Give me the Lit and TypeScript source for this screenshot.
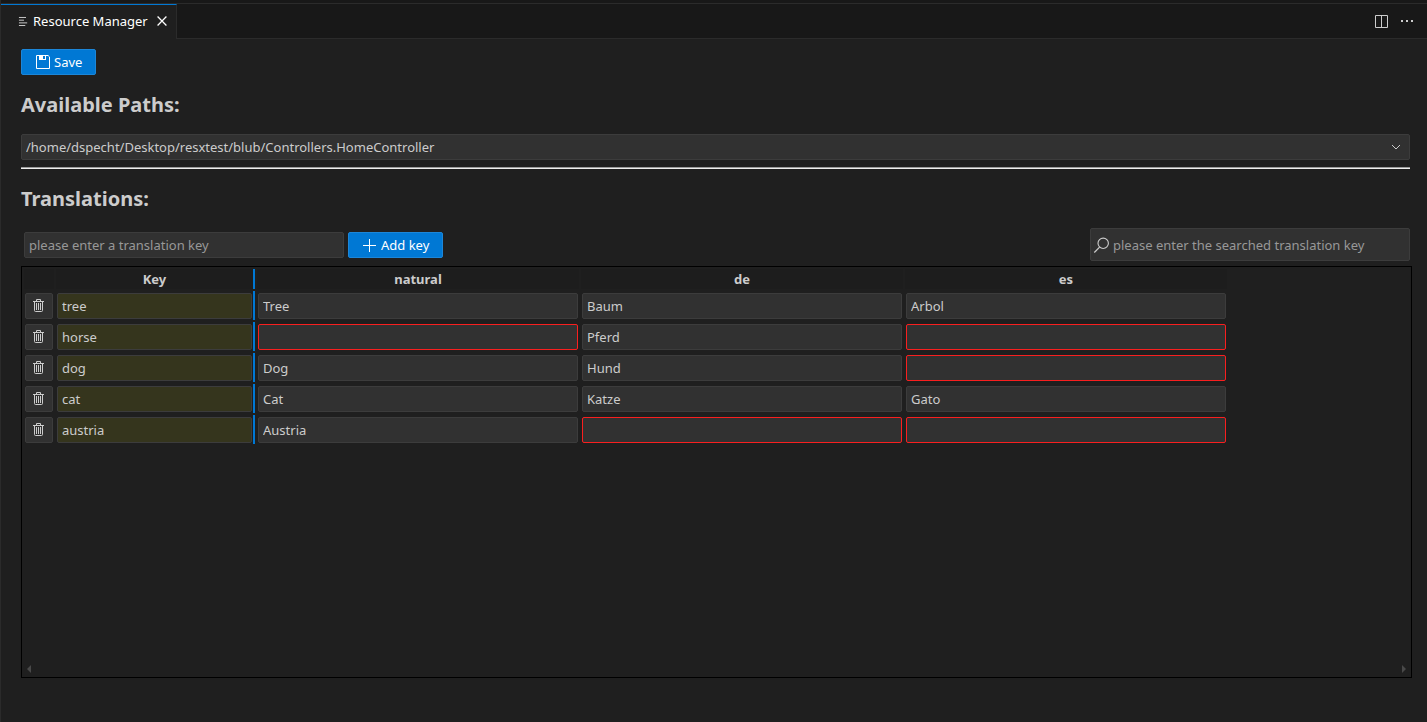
import { LitElement, html, css, svg } from "lit";
import { customElement, property, state } from "lit/decorators.js";
import { classMap } from "lit/directives/class-map.js";

interface Row {
  key: string;
  values: Record<string, string>;
}

const glyph = (size: number, body: unknown) => html`
  <svg class="icon" width=${size} height=${size} viewBox="0 0 16 16" fill="none" aria-hidden="true">
    ${body}
  </svg>
`;

const icons = {
  list: svg`<path d="M2.6 3.3h9.4M2.6 6.9h6.7M2.6 10.5h11M2.6 14h8.4" stroke="#ccc" stroke-width="1.3"/>`,
  close: svg`<path d="M2.1 2.1l11.8 11.8M13.9 2.1L2.1 13.9" stroke="currentColor" stroke-width="1.7"/>`,
  split: svg`<path d="M2.5 2.5h12v12h-12zM8.5 2.5v12" stroke="currentColor"/>`,
  more: svg`<path d="M2 7h2v2H2zM7 7h2v2H7zM12 7h2v2h-2z" fill="currentColor"/>`,
  save: svg`<path d="M1.5 1.5h11.6l1.4 1.4v11.6h-13z" stroke="currentColor"/>
    <path d="M4 1h7v5H4z" fill="currentColor"/><path d="M8 2h2v3H8z" fill="#0078d4"/>`,
  add: svg`<path d="M7.5 2v13M1 8.5h13" stroke="currentColor"/>`,
  search: svg`<circle cx="10.2" cy="6.3" r="5.2" stroke="currentColor" stroke-width="1.1"/>
    <path d="M6.6 10.1L1.3 15.5" stroke="currentColor" stroke-width="1.3"/>`,
  chevron: svg`<path d="M4 6l4 4 4-4" stroke="currentColor"/>`,
  trash: svg`<path d="M2 3.5h11M5.5 3.5v-2h4v2M3.5 3.5v9q0 1 1 1h6q1 0 1-1v-9M5.5 5v7M7.5 5v7M9.5 5v7" stroke="currentColor"/>`,
};

@customElement("editor-tabs")
export class EditorTabs extends LitElement {
  @property() label = "";

  static styles = css`
    :host {
      display: flex;
      height: 35px;
      padding-top: 3px;
      background: linear-gradient(#2b2b2b, #2b2b2b) 0 3px / 100% 1px no-repeat #181818;
      border-bottom: 1px solid #2b2b2b;
      font: 13px/18px "Noto Sans", sans-serif;
    }
    .tab {
      display: flex;
      align-items: center;
      gap: 4px;
      height: 35px;
      box-sizing: border-box;
      margin-top: 1px;
      padding: 0 8px 2px 16px;
      border-top: 1px solid #0078d4;
      border-right: 1px solid #2b2b2b;
      background: #1f1f1f;
      color: #fff;
    }
    .actions {
      display: flex;
      align-items: center;
      gap: 10px;
      margin-left: auto;
      padding-right: 12px;
    }
    button {
      display: flex;
      padding: 0;
      border: 0;
      background: none;
      color: #ccc;
      cursor: pointer;
    }
    .tab button {
      margin-left: 4px;
      color: #fff;
    }
  `;

  render() {
    return html`
      <div class="tab">
        ${glyph(12, icons.list)}
        <span>${this.label}</span>
        <button aria-label="Close">${glyph(12, icons.close)}</button>
      </div>
      <div class="actions">
        <button aria-label="Split editor">${glyph(16, icons.split)}</button>
        <button aria-label="More actions">${glyph(16, icons.more)}</button>
      </div>
    `;
  }
}

@customElement("app-root")
export class AppRoot extends LitElement {
  @state() private languages = ["natural", "de", "es"];
  @state() private rows: Row[] = [
    { key: "tree", values: { natural: "Tree", de: "Baum", es: "Arbol" } },
    { key: "horse", values: { de: "Pferd" } },
    { key: "dog", values: { natural: "Dog", de: "Hund" } },
    { key: "cat", values: { natural: "Cat", de: "Katze", es: "Gato" } },
    { key: "austria", values: { natural: "Austria" } },
  ];

  static styles = css`
    :host {
      display: flex;
      flex-direction: column;
      min-height: 100vh;
      box-sizing: border-box;
      border-left: 1px solid #2b2b2b;
      background: #1f1f1f;
      color: #ccc;
      font: 13px/18px "Noto Sans", sans-serif;
    }
    main {
      display: flex;
      flex: 1;
      flex-direction: column;
      padding: 10px 17px 44px 20px;
    }
    button,
    input,
    select {
      height: 26px;
      box-sizing: border-box;
      border: 1px solid #3c3c3c;
      border-radius: 2px;
      background: #313131;
      color: #ccc;
      font: inherit;
    }
    input,
    select {
      width: 320px;
      padding: 0 4px;
    }
    input::placeholder {
      color: #989898;
      opacity: 1;
    }
    .icon {
      display: block;
      flex: none;
    }
    .primary {
      display: flex;
      align-items: center;
      gap: 3px;
      padding: 0 13px;
      border-color: #1c86d8;
      background: #0078d4;
      color: #fff;
      cursor: pointer;
    }
    .save-button {
      align-self: flex-start;
    }
    h2 {
      margin: 16px 0;
      font-size: 20px;
      line-height: 27px;
    }
    .select {
      display: grid;
      align-items: center;
    }
    .select > * {
      grid-area: 1 / 1;
    }
    .select select {
      width: 100%;
      appearance: none;
    }
    .select .icon {
      justify-self: end;
      margin-right: 6px;
      pointer-events: none;
    }
    hr {
      width: 100%;
      box-sizing: border-box;
      margin: 7px 0 0;
      border: 0;
      border-top: 1px solid #9a9a9a;
      border-bottom: 1px solid #eee;
    }
    .toolbar {
      display: flex;
      align-items: center;
      gap: 4px;
      padding-left: 3px;
    }
    .search {
      display: flex;
      align-items: center;
      width: 320px;
      height: 33px;
      box-sizing: border-box;
      margin-left: auto;
      padding-left: 2px;
      border: 1px solid #3c3c3c;
      border-radius: 2px;
      background: #313131;
    }
    .search input {
      flex: 1;
      min-width: 0;
      border: 0;
      background: none;
    }
    .grid {
      display: flex;
      flex: 1;
      flex-direction: column;
      justify-content: space-between;
      margin: 5px -2px 0 0;
      border: 1px solid #000;
    }
    table {
      align-self: flex-start;
      border-spacing: 2px;
    }
    th,
    td {
      padding: 0;
    }
    th {
      height: 20px;
      background: #1d1d1d;
    }
    td {
      padding: 2px 1px 1px;
    }
    td > * {
      display: block;
    }
    .key {
      border-right: 2px solid #0078d4;
    }
    .key input {
      width: 195px;
      background: #35351d;
    }
    .missing {
      border-color: #f91f1f;
    }
    .delete {
      display: grid;
      place-items: center;
      width: 28px;
      padding: 0;
      cursor: pointer;
    }
    .scroll {
      display: flex;
      justify-content: space-between;
      padding: 4px 5px;
      color: #494949;
    }
    .scroll svg {
      display: block;
    }
  `;

  private remove(row: Row) {
    this.rows = this.rows.filter((r) => r !== row);
  }

  render() {
    return html`
      <editor-tabs label="Resource Manager"></editor-tabs>
      <main>
        <button class="primary save-button">${glyph(16, icons.save)}Save</button>
        <h2 id="paths">Available Paths:</h2>
        <div class="select">
          <select aria-labelledby="paths">
            <option>/home/dspecht/Desktop/resxtest/blub/Controllers.HomeController</option>
          </select>
          ${glyph(16, icons.chevron)}
        </div>
        <hr />
        <h2>Translations:</h2>
        <div class="toolbar">
          <input aria-label="Translation key" placeholder="please enter a translation key" />
          <button class="primary">${glyph(16, icons.add)}Add key</button>
          <label class="search">
            ${glyph(16, icons.search)}
            <input aria-label="Search" placeholder="please enter the searched translation key" />
          </label>
        </div>
        <div class="grid">
          <table>
            <thead>
              <tr>
                <th></th>
                <th class="key">Key</th>
                ${this.languages.map((l) => html`<th>${l}</th>`)}
              </tr>
            </thead>
            <tbody>
              ${this.rows.map(
                (row) => html`
                  <tr>
                    <td>
                      <button class="delete" aria-label="Delete ${row.key}" @click=${() => this.remove(row)}>
                        ${glyph(16, icons.trash)}
                      </button>
                    </td>
                    <td class="key"><input aria-label="Key" .value=${row.key} /></td>
                    ${this.languages.map(
                      (l) => html`
                        <td>
                          <input
                            class=${classMap({ missing: !row.values[l] })}
                            aria-label="${row.key} ${l}"
                            .value=${row.values[l] ?? ""}
                          />
                        </td>
                      `,
                    )}
                  </tr>
                `,
              )}
            </tbody>
          </table>
          <div class="scroll">
            <svg width="4" height="8" aria-hidden="true"><path d="M4 0v8L0 4z" fill="currentColor" /></svg>
            <svg width="4" height="8" aria-hidden="true"><path d="M0 0v8l4-4z" fill="currentColor" /></svg>
          </div>
        </div>
      </main>
    `;
  }
}
